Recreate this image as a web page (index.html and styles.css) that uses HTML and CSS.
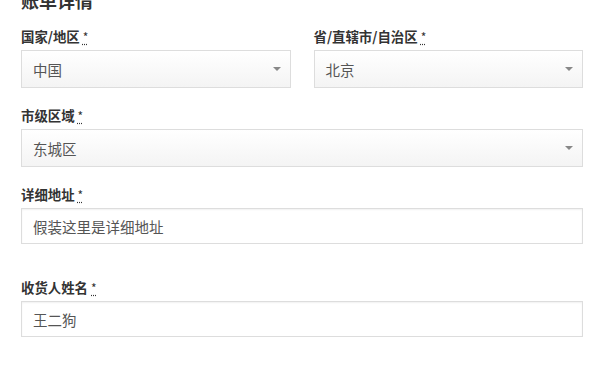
FILE: index.html
```html
<!DOCTYPE html>
<html lang="zh-CN">
<head>
<meta charset="utf-8">
<title>账单详情</title>
<link rel="stylesheet" href="styles.css">
</head>
<body>
<div class="billing">
  <h3 class="billing-title">账单详情</h3>
  <div class="row">
    <div class="field">
      <label class="field-label">国家/地区 <abbr class="req" title="必填">*</abbr></label>
      <div class="select"><span class="select-value">中国</span><svg class="arrow" width="8" height="4" viewBox="0 0 8 4"><path d="M0 0H8L4 4Z" fill="#888"/></svg></div>
    </div>
    <div class="field">
      <label class="field-label">省/直辖市/自治区 <abbr class="req" title="必填">*</abbr></label>
      <div class="select"><span class="select-value">北京</span><svg class="arrow" width="8" height="4" viewBox="0 0 8 4"><path d="M0 0H8L4 4Z" fill="#888"/></svg></div>
    </div>
  </div>
  <div class="field">
    <label class="field-label">市级区域 <abbr class="req" title="必填">*</abbr></label>
    <div class="select"><span class="select-value">东城区</span><svg class="arrow" width="8" height="4" viewBox="0 0 8 4"><path d="M0 0H8L4 4Z" fill="#888"/></svg></div>
  </div>
  <div class="field">
    <label class="field-label">详细地址 <abbr class="req" title="必填">*</abbr></label>
    <input class="text-input" type="text" value="假装这里是详细地址">
  </div>
  <div class="field field-spaced">
    <label class="field-label">收货人姓名 <abbr class="req" title="必填">*</abbr></label>
    <input class="text-input" type="text" value="王二狗">
  </div>
</div>
</body>
</html>
```
FILE: styles.css
```css
* { box-sizing: border-box; }
html, body { margin: 0; padding: 0; background: #fff; }
body {
  font-family: "Noto Sans CJK SC", "Liberation Sans", sans-serif;
  color: #333;
  overflow: hidden;
}
.billing {
  width: 562px;
  margin-left: 21px;
}
.billing-title {
  font-size: 18px;
  line-height: 24px;
  font-weight: bold;
  margin: -12px 0 14px;
  color: #333;
}
.row {
  display: flex;
  gap: 23px;
}
.row .field { flex: 1; }
.field { margin-bottom: 17px; }
.field-spaced { margin-top: 33px; }
.field-label {
  display: block;
  height: 20px;
  font-size: 13.4px;
  line-height: 20px;
  font-weight: bold;
  color: #333;
  margin-bottom: 4px;
  overflow: visible;
}
.req {
  text-decoration: underline dotted;
  text-underline-offset: 2px;
  font-weight: normal;
  color: #333;
  font-size: 12px;
  line-height: 0;
}
.select {
  display: flex;
  align-items: center;
  height: 38px;
  border: 1px solid #ddd;
  background: linear-gradient(#fff, #f4f4f4);
  padding: 0 9px 0 11px;
  font-size: 14.5px;
  color: #555;
}
.select-value { flex: 1; }
.arrow { display: block; }
.text-input {
  display: block;
  width: 100%;
  height: 36px;
  border: 1px solid #ddd;
  box-shadow: inset 0 1px 2px rgba(0,0,0,0.06);
  background: #fff;
  padding: 0 11px;
  font: inherit;
  font-size: 14.5px;
  color: #555;
  outline: none;
}
```
